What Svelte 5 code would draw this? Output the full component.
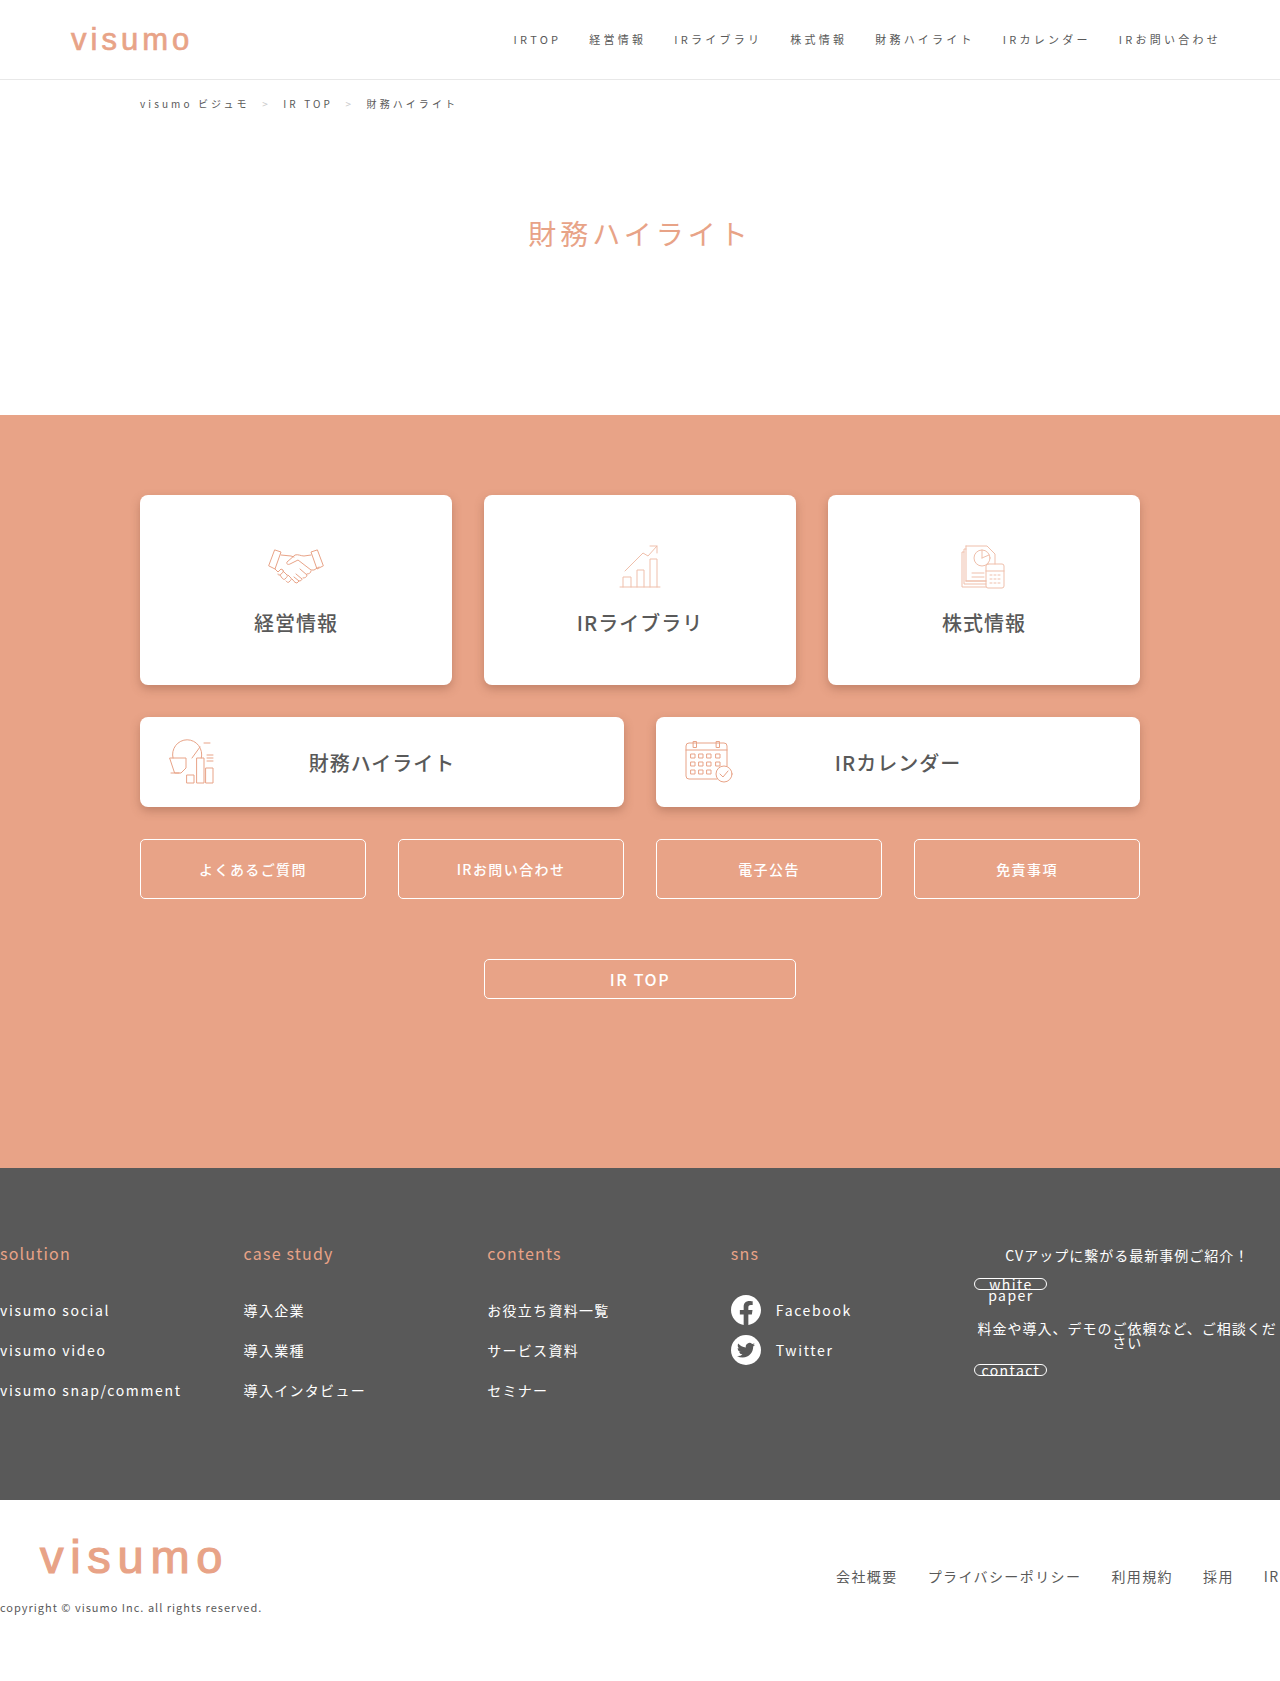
<script lang="ts">
	const nav = ['IRTOP', '経営情報', 'IRライブラリ', '株式情報', '財務ハイライト', 'IRカレンダー', 'IRお問い合わせ'];
	const subLinks = ['よくあるご質問', 'IRお問い合わせ', '電子公告', '免責事項'];
	const footerCols = [
		{ title: 'solution', latin: true, items: ['visumo social', 'visumo video', 'visumo snap/comment'] },
		{ title: 'case study', latin: false, items: ['導入企業', '導入業種', '導入インタビュー'] },
		{ title: 'contents', latin: false, items: ['お役立ち資料一覧', 'サービス資料', 'セミナー'] }
	];
	const legal = ['会社概要', 'プライバシーポリシー', '利用規約', '採用', 'IRお問い合わせ'];
</script>

<div class="page">
	<header class="site-head">
		<a class="logo" href="#top">visumo</a>
		<nav class="gnav">
			{#each nav as item}
				<a href="#top">{item}</a>
			{/each}
		</nav>
	</header>

	<ol class="crumbs">
		<li>visumo ビジュモ</li>
		<li class="sep">&gt;</li>
		<li>IR TOP</li>
		<li class="sep">&gt;</li>
		<li>財務ハイライト</li>
	</ol>

	<h1 class="title">財務ハイライト</h1>

	<section class="ir">
		<div class="row three">
			<a class="card tall" href="#top">
				<svg class="ico" viewBox="-2 -7 60 50">
					<path d="M7 1l6 2-6 17-6-3zM49 1l-6 2 6 17 6-3z" />
					<path d="M13 6l10 1 3 1M43 6l-7 1c-3 0-6-2-9-1l-8 7c-1 2 1 3 3 2l6-3 2-1 13 10 3 0 5-3" />
					<path d="M7 20l3 3 3-3 2 1c1 1 0 3-2 4-2 2-3 1-3 0M15 22l4 4c1 1 0 2-2 4-1 1-2 0-3-1l-2-3M20 26l3 3c1 1 0 2-2 4-1 1-2 0-3-1M24 30l1 1c1 2 3 3 4 3l2-2 -5-4M31 32c2 0 3-1 3-2l-6-5M35 29c2 0 4-1 4-3l-7-6M39 25c2 0 4-1 4-3" />
				</svg>
				<span>経営情報</span>
			</a>
			<a class="card tall" href="#top">
				<svg class="ico pale" viewBox="10 11 60 50">
					<path d="M20 56h40M23 56V46h8v10M37 56V39h7v17M50 56V28h7v28" />
					<path d="M25 40l18-18 5 3 9-10M50 15h7v7" />
				</svg>
				<span>IRライブラリ</span>
			</a>
			<a class="card tall" href="#top">
				<svg class="ico pale" viewBox="9 11 60 50">
					<path d="M21 15h21l8 8v10M41 50H21zM21 15v35" />
					<path d="M21 18h-2v35h22M19 21h-2v35h24" />
					<circle cx="37" cy="27" r="8" />
					<path d="M37 27v-8M37 27l7-3" />
					<path d="M27 42h12M27 46h12" />
					<rect x="41" y="33" width="18" height="24" rx="2" />
					<path d="M41 40h18M45 44h2M49 44h2M53 44h2M45 48h2M49 48h2M53 48h2M45 52h2M49 52h2M53 52h2" />
				</svg>
				<span>株式情報</span>
			</a>
		</div>

		<div class="row two">
			<a class="card wide" href="#top">
				<svg class="ico-wide" viewBox="10 2 60 60">
					<path d="M18 28a14.600 14.600 0 1 1 28.300 0" />
					<path d="M45 17L37 28" />
					<path d="M15 28h16v10l-5 5h-6z" />
					<path d="M16 43h8M49 13h6M52 25h6M52 28h6M52 31h6" />
					<rect x="32" y="45" width="7" height="8" />
					<rect x="42" y="28" width="7" height="25" />
					<rect x="51" y="38" width="7" height="15" />
				</svg>
				<span>財務ハイライト</span>
			</a>
			<a class="card wide" href="#top">
				<svg class="ico-wide" viewBox="6 2 60 60">
					<path d="M42 49H14a3 3 0 0 1-3-3V16a3 3 0 0 1 3-3h35a3 3 0 0 1 3 3v20" />
					<path d="M11 20h41" />
					<rect x="18.500" y="11.500" width="3" height="6" />
					<rect x="41.500" y="11.500" width="3" height="6" />
					{#each [24, 32, 40] as y}
						{#each [16, 24, 32, 41] as x}
							{#if !(y === 40 && x === 41)}
								<rect {x} {y} width="4" height="4" />
							{/if}
						{/each}
					{/each}
					<circle cx="49" cy="44" r="8" />
					<path d="M45 44l3 3 5-6" />
				</svg>
				<span>IRカレンダー</span>
			</a>
		</div>

		<div class="row four">
			{#each subLinks as link}
				<a class="ghost" href="#top">{link}</a>
			{/each}
		</div>

		<a class="ghost back" href="#top">IR TOP</a>
	</section>

	<section class="foot-links">
		{#each footerCols as col}
			<div class="col" class:latin={col.latin}>
				<h2>{col.title}</h2>
				<ul>
					{#each col.items as item}
						<li>{item}</li>
					{/each}
				</ul>
			</div>
		{/each}

		<div class="col latin">
			<h2>sns</h2>
			<ul>
				<li class="sns">
					<svg viewBox="0 0 24 24" width="30" height="30">
						<path fill="#fff" d="M24 12.07C24 5.400 18.630 0 12 0S0 5.400 0 12.070c0 6.030 4.390 11.020 10.130 11.930v-8.440H7.080v-3.490h3.050V9.410c0-3.020 1.790-4.690 4.530-4.690 1.310 0 2.680.24 2.680.24v2.970h-1.510c-1.490 0-1.950.93-1.950 1.880v2.260h3.330l-.53 3.490h-2.800V24C19.610 23.090 24 18.100 24 12.070z" />
					</svg>
					Facebook
				</li>
				<li class="sns">
					<svg viewBox="0 0 24 24" width="30" height="30">
						<circle cx="12" cy="12" r="12" fill="#fff" />
						<g transform="translate(4.800 5) scale(.6)">
							<path fill="#595959" d="M23.950 4.570a10 10 0 0 1-2.820.77 4.960 4.960 0 0 0 2.160-2.720c-.95.55-2 .96-3.120 1.190a4.920 4.920 0 0 0-8.380 4.480C7.690 8.100 4.070 6.130 1.640 3.160a4.820 4.820 0 0 0-.67 2.480c0 1.710.87 3.210 2.190 4.100a4.900 4.900 0 0 1-2.230-.62v.06a4.920 4.920 0 0 0 3.950 4.830 5 5 0 0 1-2.210.08 4.940 4.940 0 0 0 4.600 3.420A9.870 9.870 0 0 1 0 19.540a14 14 0 0 0 7.560 2.210c9.050 0 14-7.500 14-13.990 0-.21 0-.42-.02-.63a9.940 9.940 0 0 0 2.460-2.550z" />
						</g>
					</svg>
					Twitter
				</li>
			</ul>
		</div>

		<div class="cv">
			<p class="lead">CVアップに繋がる最新事例ご紹介！</p>
			<a class="pill" href="#top">white paper</a>
			<p class="ask">料金や導入、デモのご依頼など、ご相談ください</p>
			<a class="pill" href="#top">contact</a>
		</div>
	</section>

	<footer class="bottom">
		<div class="brand">
			<a class="logo big" href="#top">visumo</a>
			<small>copyright © visumo Inc. all rights reserved.</small>
		</div>
		<ul class="legal">
			{#each legal as item}
				<li>{item}</li>
			{/each}
		</ul>
	</footer>
</div>

<style>
	:global(body) {
		margin: 0;
		background: #fff;
	}

	.page {
		--peach: #e8a387;
		--ink: #595959;
		height: 1681px;
		overflow: hidden;
		font-family: 'Noto Sans CJK JP', 'Noto Sans', sans-serif;
		color: var(--ink);
	}

	a {
		color: inherit;
		text-decoration: none;
	}

	ul,
	ol {
		margin: 0;
		padding: 0;
		list-style: none;
	}

	.site-head {
		display: flex;
		align-items: center;
		justify-content: space-between;
		height: 79px;
		padding: 0 59px 0 71px;
		border-bottom: 1px solid #e8e8e8;
	}

	.logo {
		font-family: 'Liberation Sans', Arial, sans-serif;
		font-size: 31px;
		line-height: 1;
		letter-spacing: 4px;
		color: var(--peach);
		-webkit-text-stroke: 0.7px var(--peach);
	}

	.gnav {
		display: flex;
		gap: 28px;
		font-size: 11px;
		letter-spacing: 3.250px;
		line-height: 20px;
		margin-top: -1px;
	}

	.crumbs {
		display: flex;
		gap: 12.500px;
		height: 16px;
		margin: 16px 0 0 140px;
		font-size: 10px;
		line-height: 16px;
		letter-spacing: 3.100px;
	}

	.crumbs .sep {
		color: #c9c9c9;
	}

	.title {
		margin: 101px 0 0;
		font-size: 28px;
		font-weight: 400;
		line-height: 40px;
		letter-spacing: 4px;
		text-align: center;
		color: var(--peach);
	}

	.ir {
		height: 593px;
		margin-top: 162px;
		padding: 80px 140px;
		background: var(--peach);
	}

	.row {
		display: grid;
		gap: 32px;
		margin-bottom: 32px;
	}

	.three {
		grid-template-columns: repeat(3, 1fr);
	}

	.two {
		grid-template-columns: repeat(2, 1fr);
	}

	.four {
		grid-template-columns: repeat(4, 1fr);
		margin-bottom: 60px;
	}

	.card {
		background: #fff;
		border-radius: 8px;
		box-shadow: 0 4px 10px rgba(120, 70, 50, 0.35);
		font-size: 20px;
		font-weight: 500;
		letter-spacing: 1px;
	}

	.tall {
		display: flex;
		flex-direction: column;
		align-items: center;
		height: 190px;
		padding-top: 47px;
		box-sizing: border-box;
	}

	.tall span {
		margin-top: 16px;
		line-height: 30px;
	}

	.ico {
		width: 60px;
		height: 50px;
	}

	.wide {
		display: grid;
		grid-template-columns: 1fr auto 1fr;
		align-items: center;
		height: 90px;
		padding: 0 25px;
	}

	.wide span {
		grid-column: 2;
		grid-row: 1;
	}

	.ico-wide {
		grid-column: 1;
		grid-row: 1;
		width: 60px;
		height: 60px;
	}

	svg.ico,
	svg.ico-wide {
		fill: none;
		stroke: var(--peach);
		stroke-width: 1;
		stroke-linejoin: round;
		stroke-linecap: round;
	}

	svg.pale {
		stroke: #efbfab;
	}

	.ghost {
		display: flex;
		align-items: center;
		justify-content: center;
		box-sizing: border-box;
		height: 60px;
		border: 1px solid #fff;
		border-radius: 5px;
		color: #fff;
		font-size: 14px;
		font-weight: 500;
		letter-spacing: 1.400px;
	}

	.back {
		width: 312px;
		height: 40px;
		margin: 0 auto;
		font-size: 16px;
		letter-spacing: 1.600px;
	}

	.foot-links {
		display: grid;
		grid-template-columns: repeat(4, 243.600px) 1fr;
		height: 332px;
		box-sizing: border-box;
		padding-top: 73px;
		background: var(--ink);
		color: #fff;
		font-size: 14px;
		letter-spacing: 1.300px;
	}

	.latin {
		letter-spacing: 1.650px;
	}

	h2 {
		margin: 0 0 30px;
		font-size: 16px;
		font-weight: 400;
		line-height: 24px;
		letter-spacing: 1.200px;
		color: var(--peach);
	}

	.col li {
		display: flex;
		align-items: center;
		height: 30px;
		margin-bottom: 10px;
		line-height: 30px;
	}

	.sns svg {
		margin-right: 15px;
	}

	.cv {
		font-size: 14px;
		letter-spacing: 1px;
		text-align: center;
	}

	.cv p {
		margin: 0;
	}

	.lead {
		padding-top: 4px;
		margin-bottom: 13px !important;
		line-height: 20px;
	}

	.ask {
		padding-top: 31px;
		margin-bottom: 15px !important;
		line-height: 14px;
	}

	.pill {
		display: block;
		box-sizing: border-box;
		width: 73px;
		height: 12px;
		border: 1px solid #fff;
		border-radius: 20px;
		line-height: 11px;
		letter-spacing: 1.400px;
		color: #fff;
	}

	.bottom {
		display: flex;
		justify-content: space-between;
		white-space: nowrap;
	}

	.brand {
		display: flex;
		flex-direction: column;
		align-items: flex-start;
	}

	.big {
		margin: 33px 0 0 40px;
		font-size: 47px;
		letter-spacing: 6.700px;
		-webkit-text-stroke: 1.200px var(--peach);
	}

	small {
		margin-top: 18px;
		font-size: 11px;
		line-height: 18px;
		letter-spacing: 1px;
	}

	.legal {
		display: flex;
		flex: none;
		gap: 30px;
		margin-top: 65px;
		margin-right: -92px;
		font-size: 14px;
		line-height: 22px;
		letter-spacing: 1.400px;
	}
</style>
